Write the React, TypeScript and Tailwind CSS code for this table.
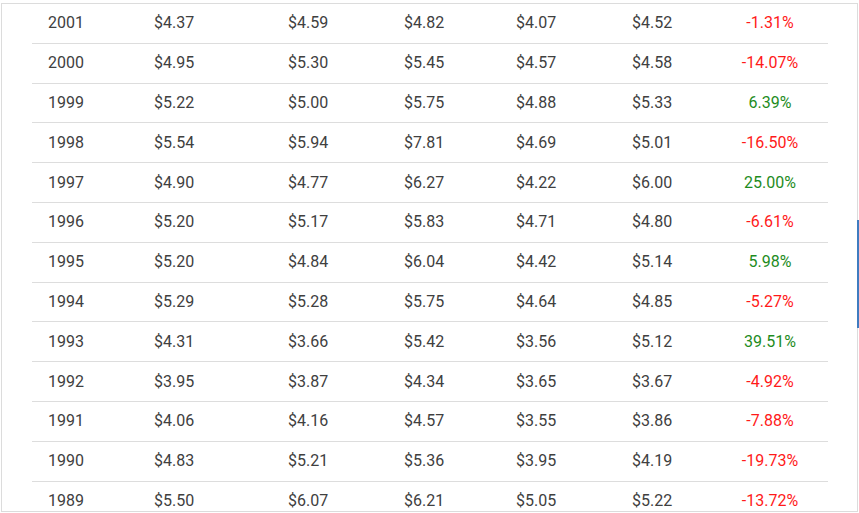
import React from "react";

type Row = [string, string, string, string, string, string, string];

const rows: Row[] = [
  ["2001", "$4.37", "$4.59", "$4.82", "$4.07", "$4.52", "-1.31%"],
  ["2000", "$4.95", "$5.30", "$5.45", "$4.57", "$4.58", "-14.07%"],
  ["1999", "$5.22", "$5.00", "$5.75", "$4.88", "$5.33", "6.39%"],
  ["1998", "$5.54", "$5.94", "$7.81", "$4.69", "$5.01", "-16.50%"],
  ["1997", "$4.90", "$4.77", "$6.27", "$4.22", "$6.00", "25.00%"],
  ["1996", "$5.20", "$5.17", "$5.83", "$4.71", "$4.80", "-6.61%"],
  ["1995", "$5.20", "$4.84", "$6.04", "$4.42", "$5.14", "5.98%"],
  ["1994", "$5.29", "$5.28", "$5.75", "$4.64", "$4.85", "-5.27%"],
  ["1993", "$4.31", "$3.66", "$5.42", "$3.56", "$5.12", "39.51%"],
  ["1992", "$3.95", "$3.87", "$4.34", "$3.65", "$3.67", "-4.92%"],
  ["1991", "$4.06", "$4.16", "$4.57", "$3.55", "$3.86", "-7.88%"],
  ["1990", "$4.83", "$5.21", "$5.36", "$3.95", "$4.19", "-19.73%"],
  ["1989", "$5.50", "$6.07", "$6.21", "$5.05", "$5.22", "-13.72%"],
];

function App() {
  return (
    <div className="w-[859px] h-[513px] overflow-hidden bg-white relative" style={{ fontFamily: "Roboto, 'Liberation Sans', sans-serif" }}>
      <div className="ml-[1px] mt-[3px] w-[857px] h-[509px] border border-[#dcdcdc] overflow-hidden pl-[30px]">
        {rows.map((r) => {
          const neg = r[6].startsWith("-");
          return (
            <div key={r[0]} className="grid grid-cols-[106px_134px_116px_112px_116px_96px_116px] h-[39.8px] border-b border-[#dddddd] items-center text-[16px] text-[#404040] w-[796px]">
              <div className="pl-4">{r[0]}</div>
              <div className="pl-4">{r[1]}</div>
              <div className="pl-4">{r[2]}</div>
              <div className="pl-4">{r[3]}</div>
              <div className="pl-4">{r[4]}</div>
              <div className="pl-4">{r[5]}</div>
              <div className={"text-center " + (neg ? "text-[#ff1a1a]" : "text-[#1e8c1e]")}>{r[6]}</div>
            </div>
          );
        })}
      </div>
      <div className="absolute left-[857px] top-[220px] w-[2px] h-[108px] bg-[#3f7cc0]" />
    </div>
  );
}

export default App;
